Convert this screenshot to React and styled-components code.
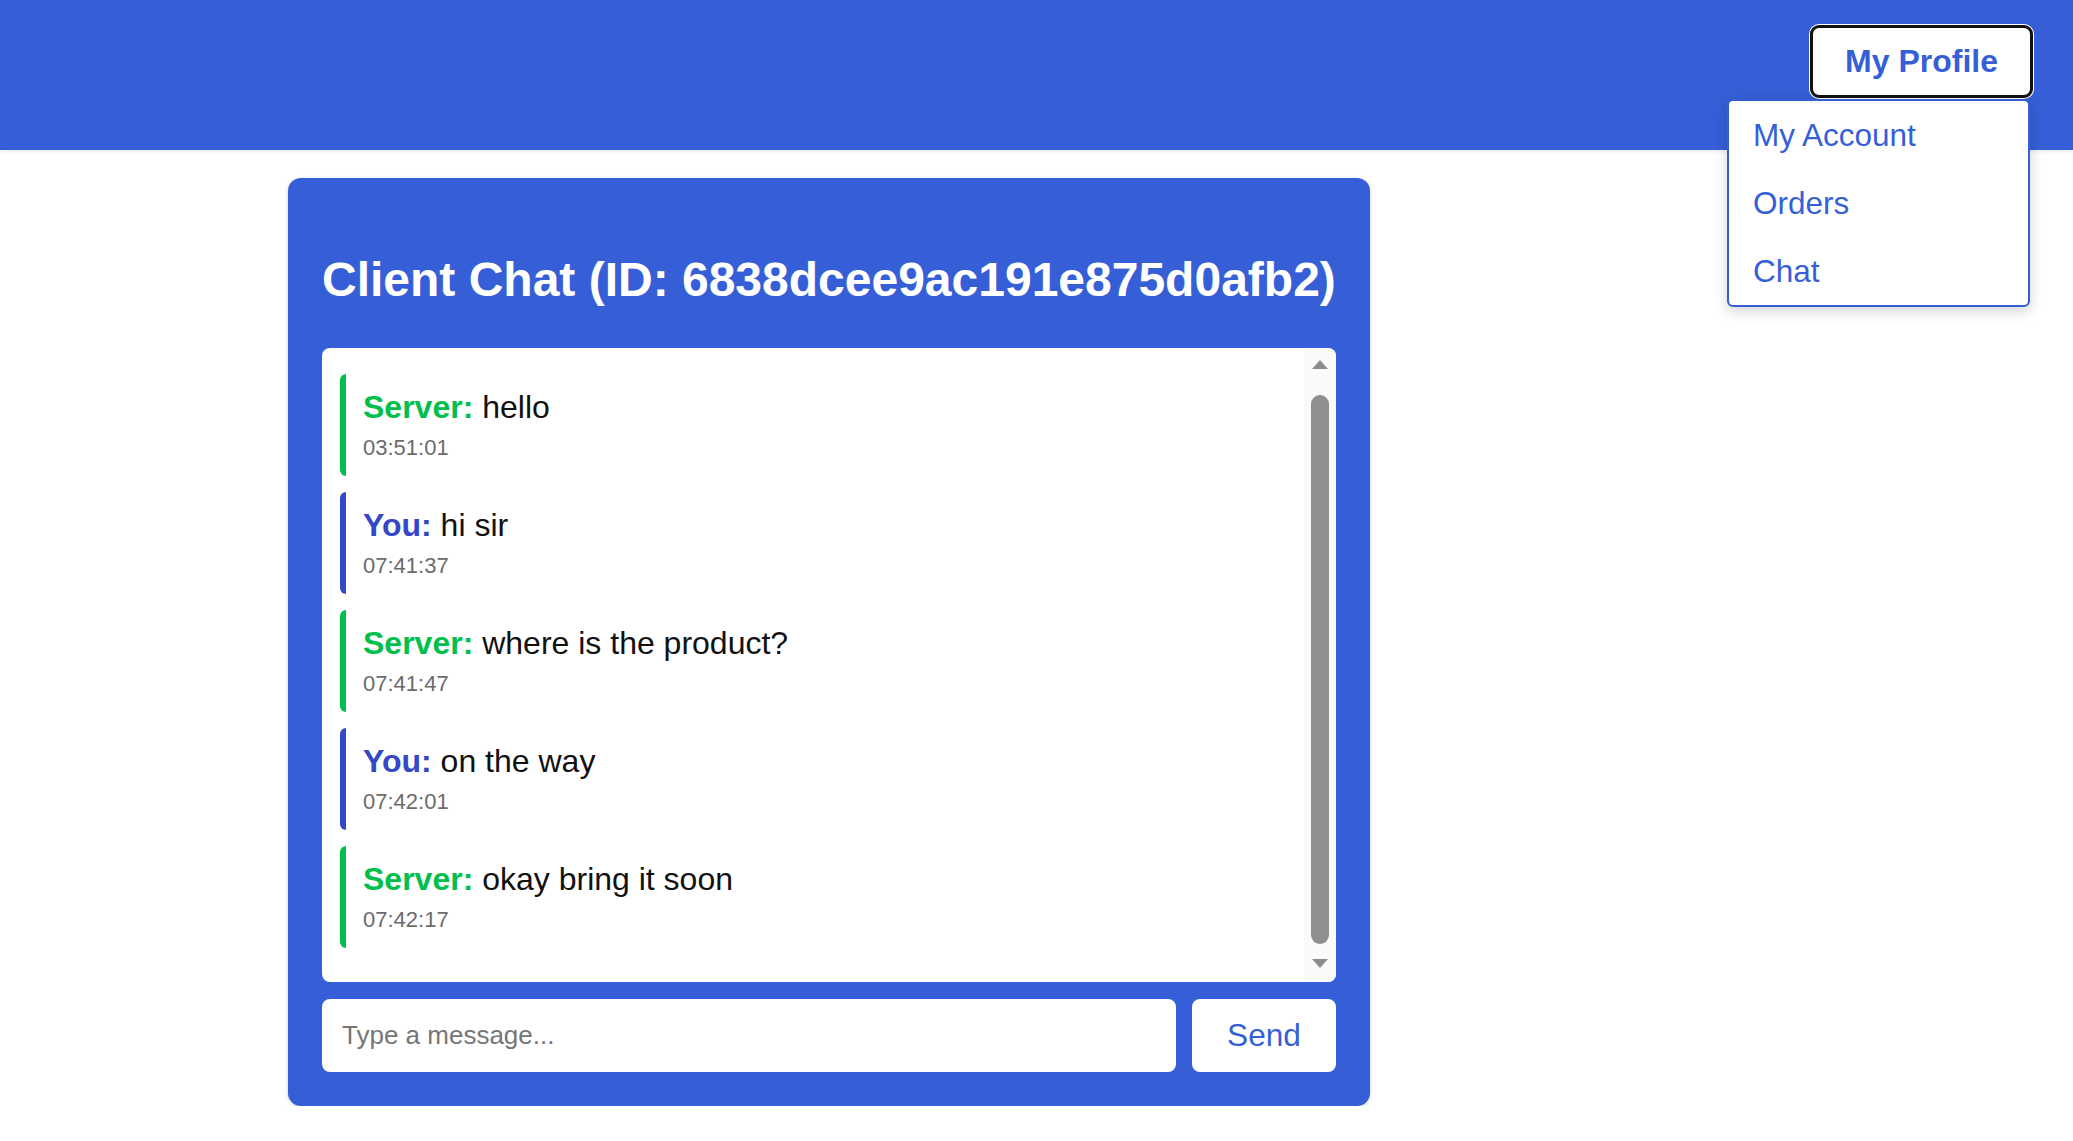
import React, { useEffect, useRef } from 'react';
import styled, { createGlobalStyle } from 'styled-components';

const BLUE = '#365fd7';

const GlobalStyle = createGlobalStyle`
  * { box-sizing: border-box; }
  body {
    margin: 0;
    background: #fff;
    font-family: 'Liberation Sans', Arial, sans-serif;
  }
`;

const Header = styled.header`
  display: flex;
  justify-content: flex-end;
  align-items: flex-start;
  height: 150px;
  padding: 25px 40px 0;
  background: ${BLUE};
  box-shadow: 0 2px 4px rgba(0, 0, 0, 0.08);
`;

const ProfileArea = styled.div`
  position: relative;
`;

const ProfileButton = styled.button`
  height: 73px;
  padding: 0 32px;
  background: #fff;
  color: ${BLUE};
  border: 3px solid #111;
  border-radius: 9px;
  box-shadow: 0 0 0 1px #fff;
  font-family: inherit;
  font-size: 32px;
  font-weight: 700;
  cursor: pointer;
`;

const Menu = styled.ul`
  position: absolute;
  top: 74px;
  right: 3px;
  width: 303px;
  margin: 0;
  padding: 0;
  list-style: none;
  background: #fff;
  border: 2px solid ${BLUE};
  border-radius: 6px;
  box-shadow: 0 4px 14px rgba(0, 0, 0, 0.18);
  z-index: 10;
`;

const MenuItem = styled.li`
  padding: 16px 24px;
  color: ${BLUE};
  font-size: 31.5px;
  line-height: 36px;
  cursor: pointer;
`;

const Card = styled.section`
  width: 1082px;
  margin: 28px 0 0 288px;
  padding: 34px;
  background: ${BLUE};
  border-radius: 13px;
  box-shadow: 0 1px 4px rgba(0, 0, 0, 0.18);
`;

const Title = styled.h2`
  margin: 41px 0;
  color: #fff;
  font-size: 48px;
  font-weight: 700;
  line-height: 54px;
  white-space: nowrap;
`;

const MessagePanel = styled.div`
  display: flex;
  height: 634px;
  background: #fff;
  border-radius: 8px;
  overflow: hidden;
`;

const MessageList = styled.div`
  flex: 1;
  overflow: hidden;
  padding: 45px 18px 34px;
  display: flex;
  flex-direction: column;
  gap: 16px;
`;

const ScrollTrack = styled.div`
  flex: none;
  width: 32px;
  display: flex;
  flex-direction: column;
  align-items: center;
  background: #fafafa;
`;

const ScrollArrow = styled.div`
  flex: none;
  height: 34px;
  display: flex;
  align-items: center;
  justify-content: center;

  &::before {
    content: '';
    border-left: 8.5px solid transparent;
    border-right: 8.5px solid transparent;
    ${({ $down }) =>
      $down ? 'border-top: 9px solid #8c8c8c; margin-top: -4px;' : 'border-bottom: 9px solid #8c8c8c; margin-top: -2px;'}
  }
`;

const ScrollThumb = styled.div`
  flex: 1;
  width: 18px;
  margin: 13px 0 4px;
  background: #8f8f8f;
  border-radius: 9px;
`;

const Message = styled.div`
  flex: none;
  padding: 15px 17px 16px;
  border-left: 6px solid ${({ $mine }) => ($mine ? '#3447c6' : '#00bf4c')};
  border-radius: 6px 0 0 6px;
`;

const Line = styled.div`
  color: #111;
  font-size: 32px;
  line-height: 36px;
`;

const Sender = styled.strong`
  color: ${({ $mine }) => ($mine ? '#3447c6' : '#00bf4c')};
  font-weight: 700;
`;

const Time = styled.div`
  margin-top: 10px;
  color: #6b6b6b;
  font-size: 22px;
  line-height: 25px;
`;

const Composer = styled.form`
  display: flex;
  gap: 16px;
  margin-top: 17px;
`;

const Input = styled.input`
  flex: 1;
  height: 73px;
  padding: 0 20px;
  border: none;
  border-radius: 8px;
  background: #fff;
  font-family: inherit;
  font-size: 26px;
  color: #111;
  outline: none;

  &::placeholder {
    color: #767676;
  }
`;

const SendButton = styled.button`
  width: 144px;
  height: 73px;
  border: none;
  border-radius: 8px;
  background: #fff;
  color: ${BLUE};
  font-family: inherit;
  font-size: 31.6px;
  cursor: pointer;
`;

const messages = [
  { from: 'Server', text: 'hello', time: '03:51:01' },
  { from: 'You', text: 'hi sir', time: '07:41:37' },
  { from: 'Server', text: 'where is the product?', time: '07:41:47' },
  { from: 'You', text: 'on the way', time: '07:42:01' },
  { from: 'Server', text: 'okay bring it soon', time: '07:42:17' },
];

const App = () => {
  const listRef = useRef(null);

  // keep the newest message in view
  useEffect(() => {
    if (listRef.current) listRef.current.scrollTop = listRef.current.scrollHeight;
  }, []);

  return (
    <>
      <GlobalStyle />
      <Header>
        <ProfileArea>
          <ProfileButton>My Profile</ProfileButton>
          <Menu>
            <MenuItem>My Account</MenuItem>
            <MenuItem>Orders</MenuItem>
            <MenuItem>Chat</MenuItem>
          </Menu>
        </ProfileArea>
      </Header>

      <Card>
        <Title>Client Chat (ID: 6838dcee9ac191e875d0afb2)</Title>
        <MessagePanel>
          <MessageList ref={listRef}>
            {messages.map((m, i) => {
              const mine = m.from === 'You';
              return (
                <Message key={i} $mine={mine}>
                  <Line>
                    <Sender $mine={mine}>{m.from}:</Sender> {m.text}
                  </Line>
                  <Time>{m.time}</Time>
                </Message>
              );
            })}
          </MessageList>
          <ScrollTrack>
            <ScrollArrow />
            <ScrollThumb />
            <ScrollArrow $down />
          </ScrollTrack>
        </MessagePanel>
        <Composer onSubmit={(e) => e.preventDefault()}>
          <Input placeholder="Type a message..." />
          <SendButton type="submit">Send</SendButton>
        </Composer>
      </Card>
    </>
  );
};

export default App;
